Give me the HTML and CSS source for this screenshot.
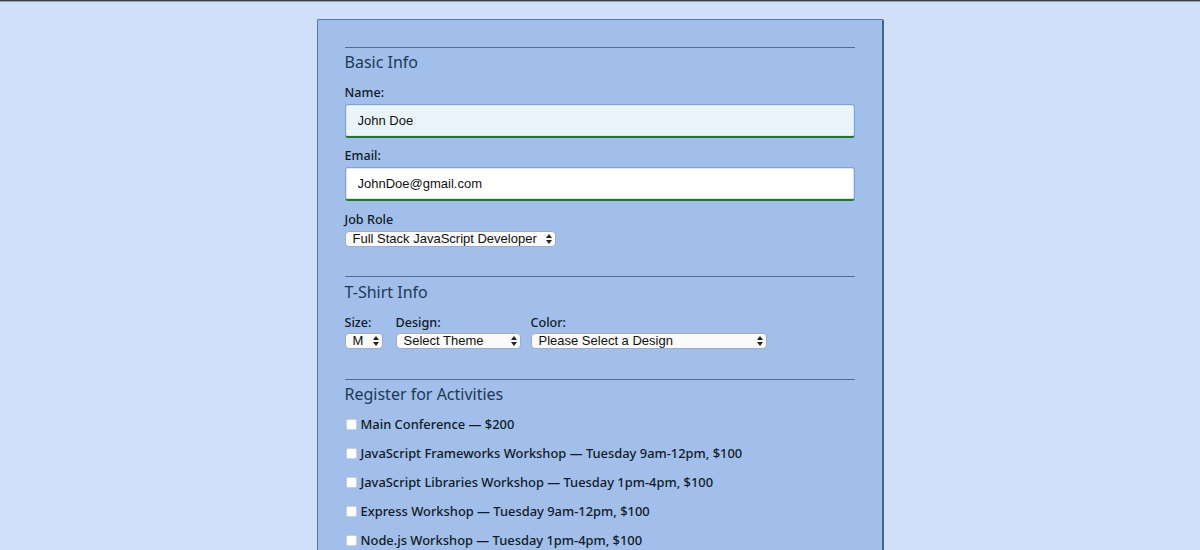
FILE: index.html
```html
<!DOCTYPE html>
<html lang="en">
<head>
<meta charset="utf-8">
<title>Registration</title>
<link rel="stylesheet" href="styles.css">
</head>
<body>
<div class="topbar"></div>
<form class="card">
  <fieldset class="section">
    <h2 class="legend">Basic Info</h2>
    <label class="label" for="name">Name:</label>
    <input class="text autofill" id="name" type="text" value="John Doe">
    <label class="label" for="mail">Email:</label>
    <input class="text" id="mail" type="email" value="JohnDoe@gmail.com">
    <label class="label" for="title">Job Role</label>
    <span class="sel">
      <select id="title" class="select role"><option>Full Stack JavaScript Developer</option></select>
      <svg class="arrow" viewBox="0 0 6 10" width="6" height="10"><path d="M0 4 L3 0 L6 4 Z M0 6 L3 10 L6 6 Z" fill="#222"/></svg>
    </span>
  </fieldset>

  <fieldset class="section shirt">
    <h2 class="legend">T-Shirt Info</h2>
    <div class="shirt-row">
      <div class="field">
        <label class="label" for="size">Size:</label>
        <span class="sel">
          <select id="size" class="select size"><option>M</option></select>
          <svg class="arrow" viewBox="0 0 6 10" width="6" height="10"><path d="M0 4 L3 0 L6 4 Z M0 6 L3 10 L6 6 Z" fill="#222"/></svg>
        </span>
      </div>
      <div class="field">
        <label class="label" for="design">Design:</label>
        <span class="sel">
          <select id="design" class="select design"><option>Select Theme</option></select>
          <svg class="arrow" viewBox="0 0 6 10" width="6" height="10"><path d="M0 4 L3 0 L6 4 Z M0 6 L3 10 L6 6 Z" fill="#222"/></svg>
        </span>
      </div>
      <div class="field">
        <label class="label" for="color">Color:</label>
        <span class="sel">
          <select id="color" class="select color"><option>Please Select a Design</option></select>
          <svg class="arrow" viewBox="0 0 6 10" width="6" height="10"><path d="M0 4 L3 0 L6 4 Z M0 6 L3 10 L6 6 Z" fill="#222"/></svg>
        </span>
      </div>
    </div>
  </fieldset>

  <fieldset class="section activities">
    <h2 class="legend">Register for Activities</h2>
    <label class="check"><input type="checkbox"><span class="box"></span>Main Conference — $200</label>
    <label class="check"><input type="checkbox"><span class="box"></span>JavaScript Frameworks Workshop — Tuesday 9am-12pm, $100</label>
    <label class="check"><input type="checkbox"><span class="box"></span>JavaScript Libraries Workshop — Tuesday 1pm-4pm, $100</label>
    <label class="check"><input type="checkbox"><span class="box"></span>Express Workshop — Tuesday 9am-12pm, $100</label>
    <label class="check"><input type="checkbox"><span class="box"></span>Node.js Workshop — Tuesday 1pm-4pm, $100</label>
  </fieldset>
</form>
</body>
</html>
```

FILE: styles.css
```css
* { box-sizing: border-box; }

html, body {
  margin: 0;
  padding: 0;
  background: #d0e0f8;
  height: 100%;
  overflow: hidden;
}

body {
  font-family: "Noto Sans", "Lato", sans-serif;
  color: #1b2433;
}

.topbar {
  height: 2px;
  background: #3a3d40;
  border-bottom: 1px solid #9aa4ae;
}

.card {
  width: 567px;
  margin: 17px auto 0;
  background: #a1bfea;
  border: 1px solid #58799c;
  border-right: 2px solid #43648a;
  border-radius: 2px;
  padding: 27px 27px 0 27px;
  min-height: 560px;
}

.section {
  border: 0;
  border-top: 1px solid #4f7296;
  margin: 0;
  padding: 0;
  display: flex;
  flex-direction: column;
  align-items: flex-start;
}

.legend {
  margin: 5px 0 0;
  font-size: 16px;
  font-weight: 400;
  color: #1d3a55;
  line-height: 18px;
}

.label {
  font-size: 12.6px;
  font-weight: 500;
  line-height: 14px;
  margin-top: 15px;
  margin-bottom: 4px;
  color: #111a26;
}

.text {
  width: 100%;
  height: 34px;
  border: 1px solid #7fa3cf;
  border-bottom: 2px solid #1f7a1f;
  border-radius: 3px;
  background: #ffffff;
  font-family: "Liberation Sans", Arial, sans-serif;
  font-size: 13px;
  color: #111;
  padding: 0 12px;
  box-shadow: inset 0 0 0 1px #d8e6f5;
  margin: 0;
}

.text.autofill { background: #eaf4fb; }

.label[for="mail"] { margin-top: 11px; }
.label[for="title"] { margin-top: 12px; }

.sel {
  position: relative;
  display: inline-block;
  line-height: 0;
}

.select {
  appearance: none;
  -webkit-appearance: none;
  height: 16px;
  border: 1px solid #a4acb6;
  border-radius: 4px;
  background: #fafafa;
  font-family: "Liberation Sans", Arial, sans-serif;
  font-size: 13px;
  line-height: 14px;
  color: #111;
  padding: 0 18px 0 7px;
  margin: 0;
}

.arrow {
  position: absolute;
  right: 4px;
  top: 3px;
  pointer-events: none;
}

.role { width: 211px; }
.size { width: 38px; }
.design { width: 125px; }
.color { width: 236px; }

.shirt { margin-top: 29px; }
.shirt .legend { margin-top: 6px; }

.shirt-row {
  display: flex;
  gap: 0;
}

.shirt-row .field { display: flex; flex-direction: column; align-items: flex-start; }
.shirt-row .field:nth-child(1) { width: 51px; }
.shirt-row .field:nth-child(2) { width: 135px; }
.shirt-row .label { margin-top: 15px; margin-bottom: 3px; }

.activities { margin-top: 30px; }
.activities .legend { margin-bottom: 6px; }

.check {
  display: flex;
  align-items: center;
  font-size: 12.9px;
  font-weight: 500;
  line-height: 16px;
  height: 29px;
  color: #111a26;
}

.check input { display: none; }

.box {
  width: 11px;
  height: 11px;
  background: #fff;
  border: 1px solid #c9d0d8;
  border-radius: 2px;
  margin: 2px 4px 0 1px;
  flex: none;
}
```
